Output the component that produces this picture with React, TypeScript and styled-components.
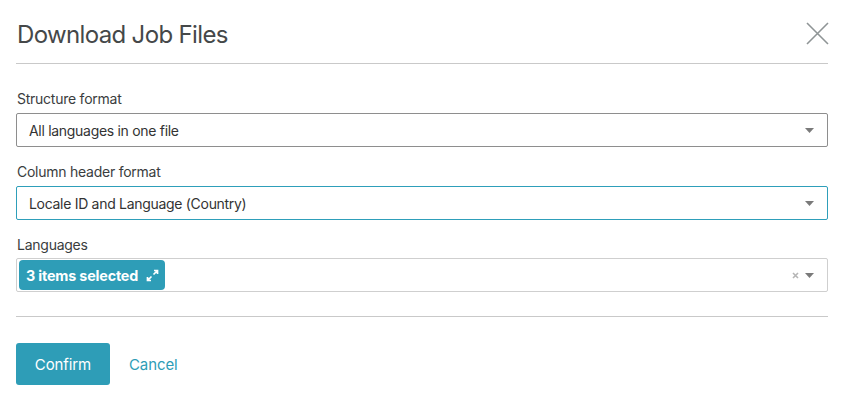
import React from "react";
import styled, { createGlobalStyle } from "styled-components";

const Global = createGlobalStyle`
  html, body { margin: 0; padding: 0; background: #ffffff; }
  body { font-family: "Inter", "Liberation Sans", sans-serif; color: #333; }
  * { box-sizing: border-box; }
`;

const Modal = styled.div`
  width: 812px;
  margin-left: 16px;
  display: flex;
  flex-direction: column;
`;

const Header = styled.div`
  height: 64px;
  display: flex;
  align-items: center;
  justify-content: space-between;
  border-bottom: 1px solid #c9c9c9;
`;

const Title = styled.h1`
  margin: 0 0 0 1px;
  font-size: 24px;
  font-weight: 400;
  color: #454849;
  letter-spacing: -0.65px;
  line-height: 32px;
  padding-top: 6px;
`;

const CloseButton = styled.button`
  border: 0;
  background: none;
  padding: 0;
  width: 24px;
  height: 24px;
  margin-top: 4px;
  margin-right: -1px;
  display: flex;
  align-items: center;
  justify-content: center;
  cursor: pointer;
`;

const Body = styled.div`
  padding-top: 25px;
  padding-bottom: 24px;
  border-bottom: 1px solid #c9c9c9;
  display: flex;
  flex-direction: column;
  gap: 15px;
`;

const Field = styled.div`
  display: flex;
  flex-direction: column;
  gap: 4px;
`;

const Label = styled.label`
  font-size: 14px;
  line-height: 20px;
  color: #3a3d3e;
  padding-left: 1px;
  letter-spacing: -0.25px;
`;

const SelectBox = styled.div<{ $focused?: boolean }>`
  height: 34px;
  border: 1px solid ${(p) => (p.$focused ? "#2e9fba" : "#8e8e8e")};
  border-radius: 2px;
  display: flex;
  align-items: center;
  padding: 0 13px 0 12px;
  font-size: 14px;
  letter-spacing: -0.3px;
  color: #333;
`;

const MultiBox = styled.div`
  height: 34px;
  border: 1px solid #cfcfcf;
  border-radius: 2px;
  display: flex;
  align-items: center;
  padding: 0 13px 0 2px;
  margin-top: -1px;
`;

const Value = styled.span`
  flex: 1;
`;

const Tag = styled.span`
  height: 30px;
  display: inline-flex;
  align-items: center;
  gap: 8px;
  padding: 0 6px 0 7px;
  background: #2e9db7;
  color: #fff;
  border-radius: 4px;
  font-weight: 700;
  font-size: 14.3px;
  letter-spacing: -0.15px;
`;

const Spacer = styled.span`
  flex: 1;
`;

const Indicators = styled.span`
  display: flex;
  align-items: center;
  gap: 6px;
`;

const Footer = styled.div`
  padding-top: 26px;
  display: flex;
  align-items: center;
  gap: 19px;
`;

const PrimaryButton = styled.button`
  height: 42px;
  width: 94px;
  border: 0;
  border-radius: 3px;
  background: #2e9db7;
  color: #fff;
  font-family: inherit;
  font-size: 15px;
  letter-spacing: -0.1px;
  cursor: pointer;
`;

const LinkButton = styled.button`
  border: 0;
  background: none;
  padding: 0;
  color: #2e9db7;
  font-family: inherit;
  font-size: 15px;
  letter-spacing: -0.1px;
  cursor: pointer;
`;

const Caret = () => (
  <svg width="9" height="5" viewBox="0 0 9 5">
    <path d="M0 0h9L4.5 5z" fill="#7a7a7a" />
  </svg>
);

export default function App() {
  return (
    <>
      <Global />
      <Modal>
        <Header>
          <Title>Download Job Files</Title>
          <CloseButton aria-label="Close">
            <svg width="23" height="23" viewBox="0 0 23 23">
              <path d="M1 1L22 22M22 1L1 22" stroke="#8f9596" strokeWidth="1.6" />
            </svg>
          </CloseButton>
        </Header>
        <Body>
          <Field>
            <Label>Structure format</Label>
            <SelectBox>
              <Value>All languages in one file</Value>
              <Caret />
            </SelectBox>
          </Field>
          <Field>
            <Label>Column header format</Label>
            <SelectBox $focused>
              <Value>Locale ID and Language (Country)</Value>
              <Caret />
            </SelectBox>
          </Field>
          <Field>
            <Label>Languages</Label>
            <MultiBox>
              <Tag>
                3 items selected
                <svg width="13" height="13" viewBox="0 0 13 13">
                  <path d="M8 1.5h3.5V5M11.5 1.5L7.5 5.5M5 11.5H1.5V8M1.5 11.5l4-4" stroke="#fff" strokeWidth="1.7" fill="none" />
                </svg>
              </Tag>
              <Spacer />
              <Indicators>
                <svg width="7" height="7" viewBox="0 0 7 7">
                  <path d="M1 1l5 5M6 1L1 6" stroke="#b5b5b5" strokeWidth="1.6" />
                </svg>
                <Caret />
              </Indicators>
            </MultiBox>
          </Field>
        </Body>
        <Footer>
          <PrimaryButton>Confirm</PrimaryButton>
          <LinkButton>Cancel</LinkButton>
        </Footer>
      </Modal>
    </>
  );
}
